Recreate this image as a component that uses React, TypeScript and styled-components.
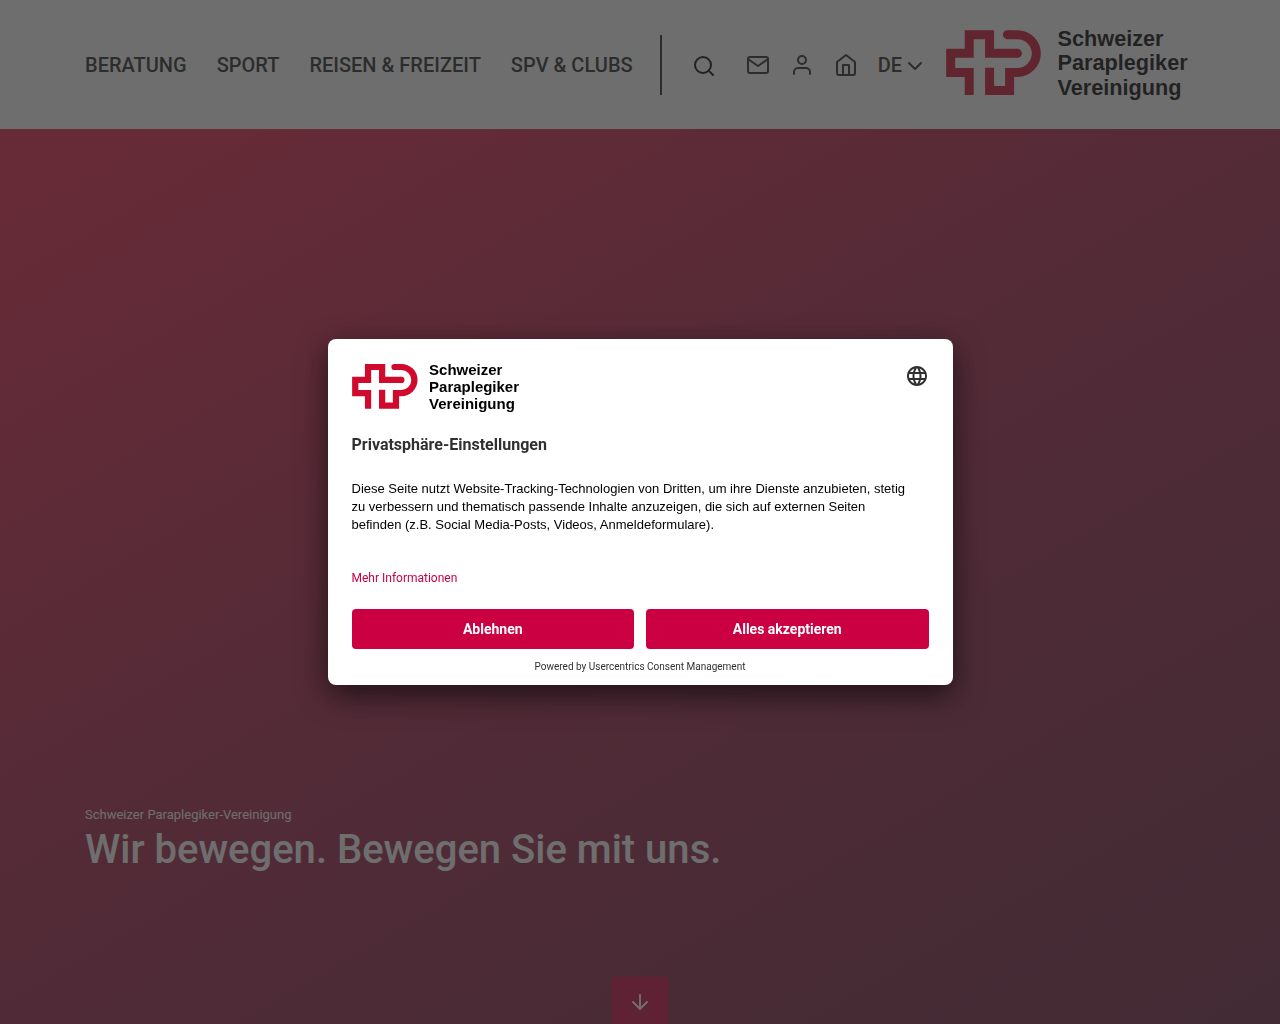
import React from "react";
import styled, { createGlobalStyle } from "styled-components";

const sans = `Roboto, "Liberation Sans", sans-serif`;

const GlobalStyle = createGlobalStyle`
  *, *::before, *::after { box-sizing: border-box; }
  body { margin: 0; font-family: ${sans}; color: #1f2526; background: #fff; }
`;

const Page = styled.div`
  display: flex;
  flex-direction: column;
  height: 100vh;
  overflow: hidden;
`;

const Container = styled.div`
  width: 100%;
  max-width: 1140px;
  margin: 0 auto;
  padding: 0 15px;
`;

const Header = styled.header`
  background: #fff;
  padding: 26px 0;
`;

const HeaderRow = styled(Container)`
  display: flex;
  align-items: center;
`;

const Nav = styled.nav`
  display: flex;
  gap: 30px;
`;

const NavLink = styled.a`
  color: inherit;
  font-size: 20px;
  font-weight: 500;
  line-height: 24px;
  text-transform: uppercase;
  text-decoration: none;
  white-space: nowrap;
`;

const Divider = styled.div`
  width: 2px;
  height: 60px;
  margin: 0 30px 0 27px;
  background: #1f2526;
`;

const Tools = styled.div`
  display: flex;
  align-items: center;
  gap: 20px;
`;

const ToolLink = styled.a`
  display: flex;
  color: inherit;
`;

const IconButton = styled.button`
  display: flex;
  padding: 0;
  border: 0;
  background: none;
  color: inherit;
  cursor: pointer;
`;

const SearchButton = styled(IconButton)`
  margin-right: 10px;
  padding-top: 2px;
  color: #000;
`;

const Language = styled.label`
  display: flex;
  align-items: center;
`;

const LanguageSelect = styled.select`
  appearance: none;
  padding: 0;
  border: 0;
  background: none;
  color: inherit;
  font-family: ${sans};
  font-size: 20px;
  font-weight: 500;
  line-height: 24px;
`;

const LogoLink = styled.a<{ $width: number }>`
  display: block;
  flex: none;
  width: ${(p) => p.$width}px;
  svg { display: block; width: 100%; height: auto; overflow: visible; }
`;

const HeaderLogo = styled(LogoLink)`
  margin-left: 19px;
`;

const Hero = styled.main`
  display: flex;
  flex-direction: column;
  flex: 1;
  justify-content: flex-end;
  background: linear-gradient(150deg, #e61f48 0%, #e11f48 8%, #a31f48 48%, #74203f 90%, #702040 100%);
  color: #fff;
`;

const Kicker = styled.p`
  margin: 0;
  font-size: 13px;
  line-height: 20px;
`;

const Title = styled.h1`
  margin: 0 0 102px;
  font-size: 40px;
  font-weight: 500;
  line-height: 50px;
`;

const ScrollButton = styled.a`
  display: flex;
  justify-content: center;
  align-self: center;
  width: 56px;
  height: 47px;
  padding-top: 13px;
  background: #c8003f;
  color: #fff;
`;

const Overlay = styled.div`
  position: fixed;
  inset: 0;
  display: flex;
  align-items: center;
  justify-content: center;
  background: rgba(48, 48, 48, 0.7);
`;

const Dialog = styled.section`
  width: 625px;
  max-width: 95vw;
  padding: 22px 24px 8px;
  border-radius: 8px;
  background: #fff;
  color: #303030;
  box-shadow: 0 10px 30px rgba(0, 0, 0, 0.6);
`;

const DialogTop = styled.div`
  display: flex;
  align-items: flex-start;
  justify-content: space-between;
`;

const GlobeButton = styled(IconButton)`
  padding-top: 3px;
`;

const DialogTitle = styled.h2`
  margin: 20px 0 24px;
  font-size: 16px;
  font-weight: 700;
  line-height: 22px;
`;

const DialogText = styled.p`
  max-width: 560px;
  margin: 0 0 35px;
  color: #000;
  font-family: "Liberation Sans", Arial, sans-serif;
  font-size: 13px;
  line-height: 18px;
`;

const MoreLink = styled.a`
  display: block;
  width: fit-content;
  color: #ca0042;
  font-size: 12px;
  line-height: 18px;
  text-decoration: none;
`;

const Actions = styled.div`
  display: grid;
  grid-template-columns: 1fr 1fr;
  gap: 12px;
  margin: 22px 0 8px;
`;

const ActionButton = styled.button`
  height: 40px;
  border: 0;
  border-radius: 4px;
  background: #ca0042;
  color: #fff;
  font-family: ${sans};
  font-size: 14px;
  font-weight: 700;
  cursor: pointer;
`;

const Powered = styled.p`
  margin: 0;
  font-size: 10px;
  line-height: 20px;
  text-align: center;
`;

function Logo() {
  return (
    <svg viewBox="48 33 728 231" role="img" aria-label="Schweizer Paraplegiker-Vereinigung">
      <g fill="none" stroke="#cf0a2c" strokeWidth="27">
        <path d="M117.5 240V172H62V115H117.5V59H178.5V115H262" />
        <path d="M178.5 158V226.5H238.5V172H262A56.5 56.5 0 0 0 262 59H232" />
      </g>
      <g fill="#cf0a2c">
        <circle cx="262" cy="115" r="13.5" />
        <circle cx="232" cy="59" r="13.5" />
      </g>
      <g fill="#000" fontFamily="Liberation Sans, Arial, sans-serif" fontWeight="700" fontSize="65">
        <text x="382" y="93">Schweizer</text>
        <text x="382" y="166">Paraplegiker</text>
        <text x="382" y="239">Vereinigung</text>
      </g>
    </svg>
  );
}

function Icon({ size = 24, children }: { size?: number; children: React.ReactNode }) {
  return (
    <svg width={size} height={size} viewBox="0 0 24 24" fill="none" stroke="currentColor"
      strokeWidth="2" strokeLinecap="round" strokeLinejoin="round" aria-hidden="true">
      {children}
    </svg>
  );
}

const navItems = ["Beratung", "Sport", "Reisen & Freizeit", "SPV & Clubs"];

export default function App() {
  return (
    <>
      <GlobalStyle />
      <Page>
        <Header>
          <HeaderRow>
            <Nav>
              {navItems.map((item) => (
                <NavLink href="#" key={item}>{item}</NavLink>
              ))}
            </Nav>
            <Divider />
            <Tools>
              <SearchButton aria-label="Suche">
                <Icon><circle cx="11" cy="11" r="8" /><path d="M21 21l-4.35-4.35" /></Icon>
              </SearchButton>
              <ToolLink href="#" aria-label="Kontakt">
                <Icon>
                  <path d="M4 4h16c1.1 0 2 .9 2 2v12c0 1.1-.9 2-2 2H4c-1.1 0-2-.9-2-2V6c0-1.1.9-2 2-2z" />
                  <path d="M22 6l-10 7L2 6" />
                </Icon>
              </ToolLink>
              <ToolLink href="#" aria-label="Login">
                <Icon>
                  <path d="M20 21v-2a4 4 0 0 0-4-4H8a4 4 0 0 0-4 4v2" />
                  <circle cx="12" cy="7" r="4" />
                </Icon>
              </ToolLink>
              <ToolLink href="#" aria-label="Startseite">
                <Icon>
                  <path d="M3 9l9-7 9 7v11a2 2 0 0 1-2 2H5a2 2 0 0 1-2-2z" />
                  <path d="M9 22V12h6v10" />
                </Icon>
              </ToolLink>
              <Language>
                <LanguageSelect aria-label="Sprache">
                  <option>DE</option>
                </LanguageSelect>
                <Icon><path d="M6 10l6 6 6-6" /></Icon>
              </Language>
            </Tools>
            <HeaderLogo href="#" $width={243}><Logo /></HeaderLogo>
          </HeaderRow>
        </Header>
        <Hero>
          <Container>
            <Kicker>Schweizer Paraplegiker-Vereinigung</Kicker>
            <Title>Wir bewegen. Bewegen Sie mit uns.</Title>
          </Container>
          <ScrollButton href="#" aria-label="Nach unten">
            <Icon><path d="M12 5v14M5 12l7 7 7-7" /></Icon>
          </ScrollButton>
        </Hero>
      </Page>
      <Overlay>
        <Dialog role="dialog" aria-modal="true" aria-labelledby="privacy-title">
          <DialogTop>
            <LogoLink href="#" $width={168}><Logo /></LogoLink>
            <GlobeButton aria-label="Sprache wählen">
              <svg width="24" height="24" viewBox="0 0 24 24" fill="currentColor" aria-hidden="true">
                <path d="M11.99 2C6.47 2 2 6.48 2 12s4.47 10 9.99 10C17.52 22 22 17.52 22 12S17.52 2 11.99 2zm6.93 6h-2.95a15.65 15.65 0 0 0-1.38-3.56A8.03 8.03 0 0 1 18.92 8zM12 4.04c.83 1.2 1.48 2.53 1.91 3.96h-3.82c.43-1.43 1.08-2.76 1.91-3.96zM4.26 14C4.1 13.36 4 12.69 4 12s.1-1.36.26-2h3.38c-.08.66-.14 1.32-.14 2s.06 1.34.14 2H4.26zm.82 2h2.95c.32 1.25.78 2.45 1.38 3.56A7.99 7.99 0 0 1 5.08 16zm2.95-8H5.08a7.99 7.99 0 0 1 4.33-3.56A15.65 15.65 0 0 0 8.03 8zM12 19.96c-.83-1.2-1.48-2.53-1.91-3.96h3.82c-.43 1.43-1.08 2.76-1.91 3.96zM14.34 14H9.66c-.09-.66-.16-1.32-.16-2s.07-1.35.16-2h4.68c.09.65.16 1.32.16 2s-.07 1.34-.16 2zm.25 5.56c.6-1.11 1.06-2.31 1.38-3.56h2.95a8.03 8.03 0 0 1-4.33 3.56zM16.36 14c.08-.66.14-1.32.14-2s-.06-1.34-.14-2h3.38c.16.64.26 1.31.26 2s-.1 1.36-.26 2h-3.38z" />
              </svg>
            </GlobeButton>
          </DialogTop>
          <DialogTitle id="privacy-title">Privatsphäre-Einstellungen</DialogTitle>
          <DialogText>
            Diese Seite nutzt Website-Tracking-Technologien von Dritten, um ihre Dienste anzubieten, stetig
            zu verbessern und thematisch passende Inhalte anzuzeigen, die sich auf externen Seiten
            befinden (z.B. Social Media-Posts, Videos, Anmeldeformulare).
          </DialogText>
          <MoreLink href="#">Mehr Informationen</MoreLink>
          <Actions>
            <ActionButton>Ablehnen</ActionButton>
            <ActionButton>Alles akzeptieren</ActionButton>
          </Actions>
          <Powered>Powered by Usercentrics Consent Management</Powered>
        </Dialog>
      </Overlay>
    </>
  );
}
